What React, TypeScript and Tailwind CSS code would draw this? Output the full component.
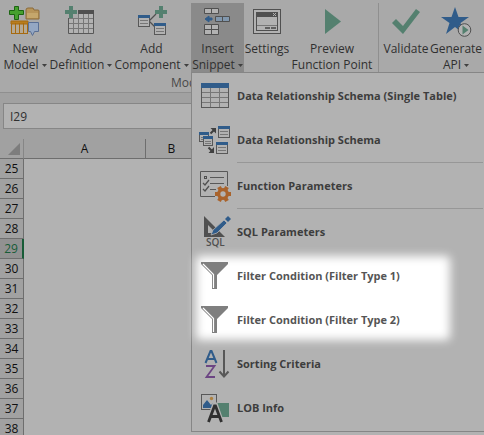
import type { ReactNode } from "react";

function Icon({ children }: { children: ReactNode }) {
  return (
    <svg width="32" height="32" viewBox="0 0 32 32" className="shrink-0" aria-hidden="true">
      {children}
    </svg>
  );
}

function Plus({ x, y }: { x: number; y: number }) {
  return <path d={`M${x + 4} ${y}h4v4h4v4h-4v4h-4v-4h-4v-4h4z`} fill="#54806f" />;
}

function Card({ x, y }: { x: number; y: number }) {
  return (
    <g>
      <rect x={x + 0.5} y={y + 0.5} width="11" height="11" fill="#b2b2b2" stroke="#585858" />
      <rect x={x} y={y} width="12" height="3" fill="#305c8a" />
      <path d={`M${x + 2} ${y + 5.5}h8M${x + 2} ${y + 8.5}h8`} stroke="#777" />
    </g>
  );
}

const NewModelIcon = () => (
  <Icon>
    <path d="M17 5q0-2 2-2h5l1 2h4q1 0 1 1v8H17z" fill="#b7955a" stroke="#8b6a39" />
    <path d="M18 8h11v5H18z" fill="#c5a76c" />
    <rect x="2.5" y="16.5" width="16" height="12" fill="#b5a995" stroke="#a66a10" />
    <path d="M2 16h17v3H2zM6.500 18v11M10.500 18v11M14.500 18v11" fill="#b97d1c" stroke="#a66a10" />
    <path d="M19.500 17.500h10v9h-4l-2 4-2-4h-2z" fill="#94a7c3" stroke="#5a6f94" />
    <path d="M5.500 1.500h4v4h5v4h-5v5h-4v-5h-5v-4h5z" fill="#46a02e" stroke="#1c6512" />
  </Icon>
);

const DefinitionIcon = () => (
  <Icon>
    <rect x="3.5" y="6.500" width="25" height="22" fill="#b2b2b2" />
    <path d="M3.500 13v15.500h25V6" fill="none" stroke="#585858" />
    <path d="M8.500 9v19M13.500 9v19M18.500 9v19M23.500 9v19M4 13.500h24M4 18.500h24M4 23.500h24" stroke="#777" />
    <path d="M0 0h13v13H0z" fill="#a9a9a9" />
    <path d="M13 5h16v4H13z" fill="#505050" />
    <Plus x={0} y={1} />
  </Icon>
);

const ComponentIcon = () => (
  <Icon>
    <path d="M13 16l7-7M13 16l6 6" stroke="#505050" strokeWidth="1.300" />
    <Card x={2} y={10} />
    <Card x={18} y={18} />
    <Plus x={19} y={1} />
  </Icon>
);

const SnippetIcon = () => (
  <Icon>
    <g fill="#b2b2b2" stroke="#505050">
      <path d="M2.500 3.500h14v5h-14zM9.500 3.500v5" />
      <path d="M2.500 19.500h14v10h-14zM9.500 19.500v10M2.500 24.500h14" />
      <path d="M13.500 11.500h14v5h-14zM20.500 11.500v5" fill="#8197ad" />
    </g>
    <path d="M3 14l4-3v2h3v2H7v2z" fill="#305c8a" stroke="#305c8a" />
  </Icon>
);

const SettingsIcon = () => (
  <Icon>
    <rect x="2.500" y="4.500" width="27" height="24" fill="#b2b2b2" stroke="#505050" />
    <rect x="5.500" y="7.500" width="21" height="18" fill="#b2b2b2" stroke="#505050" />
    <path d="M5 7h22v5H5z" fill="#505050" />
    <path d="M22 8l3 3m0-3l-3 3" stroke="#b2b2b2" />
    <path d="M6 20.500h20" stroke="#777" />
    <path d="M14 22h5v2h-5zM20 22h5v2h-5z" fill="#606060" />
  </Icon>
);

const PreviewIcon = () => (
  <Icon>
    <path d="M9 4l16 12.500L9 29z" fill="#54806f" />
  </Icon>
);

const ValidateIcon = () => (
  <Icon>
    <path d="M2 18l4-4 7 7L26 4l4 3-17 22z" fill="#54806f" />
  </Icon>
);

const GenerateIcon = () => (
  <Icon>
    <path d="M15 2l3.500 10H29l-8.500 6L24 29l-9-7-9 7 3.500-11L1 12h10.500z" fill="#305c8a" />
    <circle cx="24.500" cy="25" r="6.300" fill="#b2b2b2" stroke="#505050" />
    <path d="M22.500 20.500l6 4.500-6 4.500z" fill="#54806f" />
  </Icon>
);

const TableIcon = () => (
  <Icon>
    <rect x="2.500" y="3.500" width="27" height="24" fill="#b2b2b2" stroke="#585858" />
    <path d="M11.500 8v19M20.500 8v19M3 12.500h26M3 17.500h26M3 22.500h26" stroke="#777" />
    <path d="M2 3h28v5H2z" fill="#305c8a" />
  </Icon>
);

const RelationIcon = () => (
  <Icon>
    <g>
      <rect x="0.5" y="8.500" width="9" height="9" fill="#b2b2b2" stroke="#585858" />
      <path d="M0 8h10v3H0z" fill="#305c8a" />
      <path d="M2 13.500h2M2 15.500h2" stroke="#777" />
      <rect x="4.500" y="12.500" width="9" height="9" fill="#b2b2b2" stroke="#585858" />
      <path d="M4 12h10v3H4z" fill="#305c8a" />
      <path d="M6 17.500h6M6 19.500h6" stroke="#777" />
    </g>
    <Card x={19} y={2} />
    <Card x={17} y={18} />
    <path d="M11.500 9.500L15 6M9.500 23.500L13 27" stroke="#404040" strokeWidth="2" />
    <path d="M11.500 4H17v5.500zM15 23v6H9.500z" fill="#404040" />
  </Icon>
);

const FunctionIcon = () => (
  <Icon>
    <path d="M16 26.500H1.500v-25h27V16" fill="none" stroke="#585858" />
    <rect x="5.500" y="6.500" width="2" height="2" fill="none" stroke="#505050" />
    <path d="M11 7.500h14M11 13.500h14M11 19.500h6" stroke="#585858" />
    <path d="M4 13l2 2 4-5M4 19l2 2 4-5" fill="none" stroke="#505050" strokeWidth="1.300" />
    <g fill="#a9632c">
      <circle cx="24" cy="24" r="6" />
      <path d="M22 16h4v16h-4z" transform="rotate(30 24 24)" />
      <path d="M22 16h4v16h-4z" transform="rotate(90 24 24)" />
      <path d="M22 16h4v16h-4z" transform="rotate(150 24 24)" />
    </g>
    <circle cx="24" cy="24" r="2.700" fill="#b2b2b2" />
  </Icon>
);

const SqlIcon = () => (
  <Icon>
    <path d="M5 0l21 21H5zM9 9v8h8z" fill="#505050" fillRule="evenodd" />
    <path d="M12 19l2-5L25 4l3 3-10 10z" fill="#305c8a" stroke="#b2b2b2" strokeWidth=".8" />
    <path d="M26 3l3-3 3 3-3 3z" fill="#305c8a" />
    <text x="7" y="30" fontSize="10" fontWeight="600" fill="#505050" fontFamily="Open Sans, sans-serif">SQL</text>
  </Icon>
);

const FilterIcon = () => (
  <Icon>
    <path d="M2 2h27v2L18 15v14h-5V15L2 4z" fill="#7f7f7f" />
    <path d="M4 4l10.500 10.500V28" fill="none" stroke="#fff" strokeWidth="1.200" />
  </Icon>
);

const SortIcon = () => (
  <Icon>
    <path d="M6.500 15L11.500 3h1l5 12M8.500 11h7" fill="none" stroke="#305c8a" strokeWidth="2" />
    <path d="M7 18h8.500L7.500 29H16" fill="none" stroke="#6c4583" strokeWidth="1.800" />
    <path d="M25 2v26M20.500 23.500L25 28.500l4.500-5" fill="none" stroke="#585858" strokeWidth="2" />
  </Icon>
);

const LobIcon = () => (
  <Icon>
    <rect x="2.500" y="2.500" width="15" height="15" fill="#b2b2b2" stroke="#585858" />
    <path d="M4 16v-3l4-5 4 5 2-2 2 2v3z" fill="#305c8a" />
    <circle cx="12.500" cy="6.500" r="1.700" fill="#ad8140" />
    <path d="M18 11h12v14H18z" fill="#54806f" />
    <path d="M9.500 30L15.500 13h1l6 17M11.500 24h9" fill="none" stroke="#b2b2b2" strokeWidth="5" />
    <path d="M9.500 30L15.500 14h1l6 16M11.500 24.500h9" fill="none" stroke="#303030" strokeWidth="2.800" />
  </Icon>
);

function RibbonButton({
  icon, first, second, menu, className,
}: {
  icon: ReactNode; first: string; second?: string; menu?: boolean; className: string;
}) {
  return (
    <button
      type="button"
      aria-haspopup={menu ? "menu" : undefined}
      className={`flex shrink-0 flex-col items-center pt-0.5 text-xs leading-4 whitespace-nowrap ${className}`}
    >
      {icon}
      <span className="mt-1">{first}</span>
      <span className="flex items-center gap-[3px]">
        {second}
        {menu && (
          <svg width="5" height="3" viewBox="0 0 5 3" aria-hidden="true">
            <path d="M0 0h5L2.500 3z" fill="#404040" />
          </svg>
        )}
      </span>
    </button>
  );
}

function MenuItem({ icon, label, lit }: { icon: ReactNode; label: string; lit?: boolean }) {
  return (
    <button
      type="button"
      role="menuitem"
      className={`relative flex h-11 w-full items-center gap-1.5 pl-[7px] text-left text-[11px] font-bold whitespace-nowrap ${lit ? "text-[#555555]" : "text-[#3d3d3d]"}`}
    >
      {icon}
      {label}
    </button>
  );
}

const Divider = () => <div role="separator" className="ml-[45px] mr-px h-0.5 border-t border-[#979797]" />;

const rows = [25, 26, 27, 28, 29, 30, 31, 32, 33, 34, 35, 36, 37, 38];

export default function App() {
  return (
    <div className="relative flex h-screen flex-col overflow-hidden bg-[#a1a1a1] font-['Open_Sans','Noto_Sans',sans-serif] text-[#303030]">
      <header className="h-[93px] shrink-0 border-b border-[#8f8f8f] bg-[#a9a9a9] pt-[3px]">
        <div className="flex h-[70px]">
          <RibbonButton className="w-[50px]" icon={<NewModelIcon />} first="New" second="Model" menu />
          <RibbonButton className="w-[62px]" icon={<DefinitionIcon />} first="Add" second="Definition" menu />
          <RibbonButton className="w-[79px]" icon={<ComponentIcon />} first="Add" second="Component" menu />
          <RibbonButton className="w-[53px] bg-[#8a8a8a]" icon={<SnippetIcon />} first="Insert" second="Snippet" menu />
          <RibbonButton className="w-[46px]" icon={<SettingsIcon />} first="Settings" />
          <RibbonButton className="w-[84px]" icon={<PreviewIcon />} first="Preview" second="Function Point" />
          <div className="mx-1 w-px shrink-0 bg-[#8f8f8f]" />
          <RibbonButton className="w-[46px]" icon={<ValidateIcon />} first="Validate" />
          <RibbonButton className="w-[54px]" icon={<GenerateIcon />} first="Generate" second="API" menu />
        </div>
        <div className="pl-[171px] pt-0.5 text-xs leading-4 text-[#484848]">Mod</div>
      </header>

      <div className="pt-2.5 pl-[3px]">
        <input
          aria-label="Name box"
          defaultValue="I29"
          className="block h-[26px] w-full border border-[#868686] bg-[#b2b2b2] px-1.5 text-xs text-[#303030] outline-none"
        />
      </div>

      <table className="mt-2.5 w-full table-fixed border-separate border-spacing-0 text-center text-xs leading-4 text-[#101010]">
        <colgroup>
          <col className="w-6" />
          <col className="w-[122px]" />
          <col className="w-[52px]" />
          <col />
        </colgroup>
        <thead>
          <tr className="h-5">
            <th className="border-r border-b border-[#6e6e6e] border-r-[#868686] p-0">
              <svg width="12" height="12" viewBox="0 0 12 12" className="ml-auto mr-[3px]" aria-hidden="true">
                <path d="M12 0v12H0z" fill="#7d7d7d" />
              </svg>
            </th>
            <th scope="col" className="border-r border-b border-[#6e6e6e] p-0 font-normal">A</th>
            <th scope="col" className="border-r border-b border-[#6e6e6e] p-0 font-normal">B</th>
            <th className="border-b border-[#6e6e6e] p-0" />
          </tr>
        </thead>
        <tbody>
          {rows.map((n) => (
            <tr key={n} className="h-5">
              <th
                scope="row"
                className={
                  n === 29
                    ? "border-r-2 border-b border-[#6e6e6e] border-r-[#175c37] bg-[#919191] p-0 font-normal text-[#175c37]"
                    : "border-r border-b border-[#6e6e6e] p-0 font-normal"
                }
              >
                {n}
              </th>
              <td colSpan={3} className="bg-[#b2b2b2] p-0" />
            </tr>
          ))}
        </tbody>
      </table>

      <div
        role="menu"
        aria-label="Insert Snippet"
        className="absolute top-[72px] right-0 left-[191px] border-y border-l border-[#868686] bg-[#b2b2b2] pt-px pb-px"
      >
        <MenuItem icon={<TableIcon />} label="Data Relationship Schema (Single Table)" />
        <MenuItem icon={<RelationIcon />} label="Data Relationship Schema" />
        <Divider />
        <MenuItem icon={<FunctionIcon />} label="Function Parameters" />
        <Divider />
        <MenuItem icon={<SqlIcon />} label="SQL Parameters" />
        <div className="relative">
          <div className="absolute inset-y-0.5 left-1 w-[254px] rounded-sm bg-white blur-[5px]" />
          <MenuItem lit icon={<FilterIcon />} label="Filter Condition (Filter Type 1)" />
          <MenuItem lit icon={<FilterIcon />} label="Filter Condition (Filter Type 2)" />
        </div>
        <MenuItem icon={<SortIcon />} label="Sorting Criteria" />
        <MenuItem icon={<LobIcon />} label="LOB Info" />
      </div>
    </div>
  );
}
